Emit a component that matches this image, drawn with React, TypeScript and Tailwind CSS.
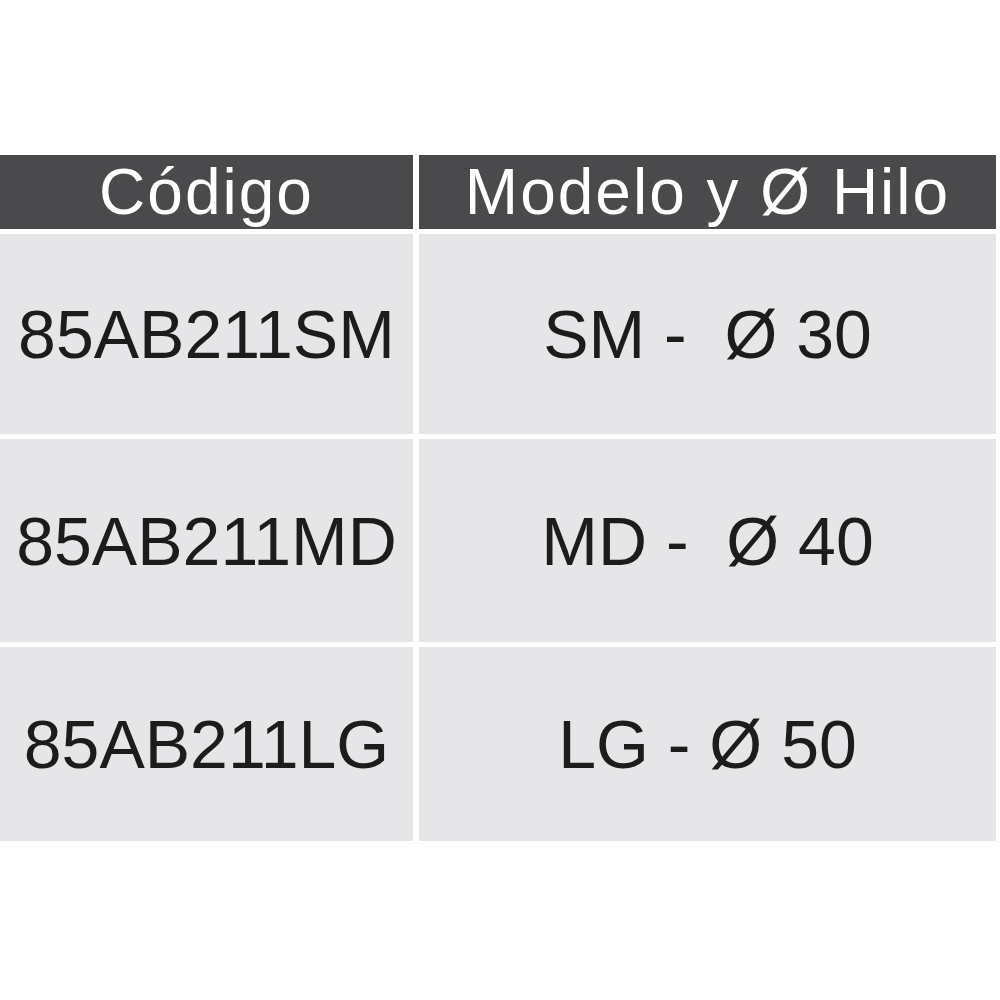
import { Fragment } from "react";

const rows = [
  { code: "85AB211SM", model: "SM -  Ø 30", h: "h-[200px]" },
  { code: "85AB211MD", model: "MD -  Ø 40", h: "h-[203px]" },
  { code: "85AB211LG", model: "LG - Ø 50", h: "h-[194px]" },
];

export default function App() {
  return (
    <div
      className="w-[1000px] h-[1000px] bg-white pt-[155px]"
      style={{ fontFamily: '"Liberation Sans", Arial, sans-serif' }}
    >
      <div className="w-[996px] grid grid-cols-[413px_1fr] gap-x-[6px] gap-y-[5px]">
        <div className="h-[74px] bg-[#4a4a4c] flex items-center justify-center text-white text-[64px] tracking-[2px] leading-none">
          Código
        </div>
        <div className="h-[74px] bg-[#4a4a4c] flex items-center justify-center text-white text-[64px] tracking-[2px] leading-none">
          Modelo y Ø Hilo
        </div>
        {rows.map((r) => (
          <Fragment key={r.code}>
            <div
              className={`${r.h} bg-[#e6e6e8] flex items-center justify-center text-[#1c1c1c] text-[68px] leading-none`}
            >
              {r.code}
            </div>
            <div
              className={`${r.h} bg-[#e6e6e8] flex items-center justify-center text-[#1c1c1c] text-[68px] leading-none whitespace-pre`}
            >
              {r.model}
            </div>
          </Fragment>
        ))}
      </div>
    </div>
  );
}
